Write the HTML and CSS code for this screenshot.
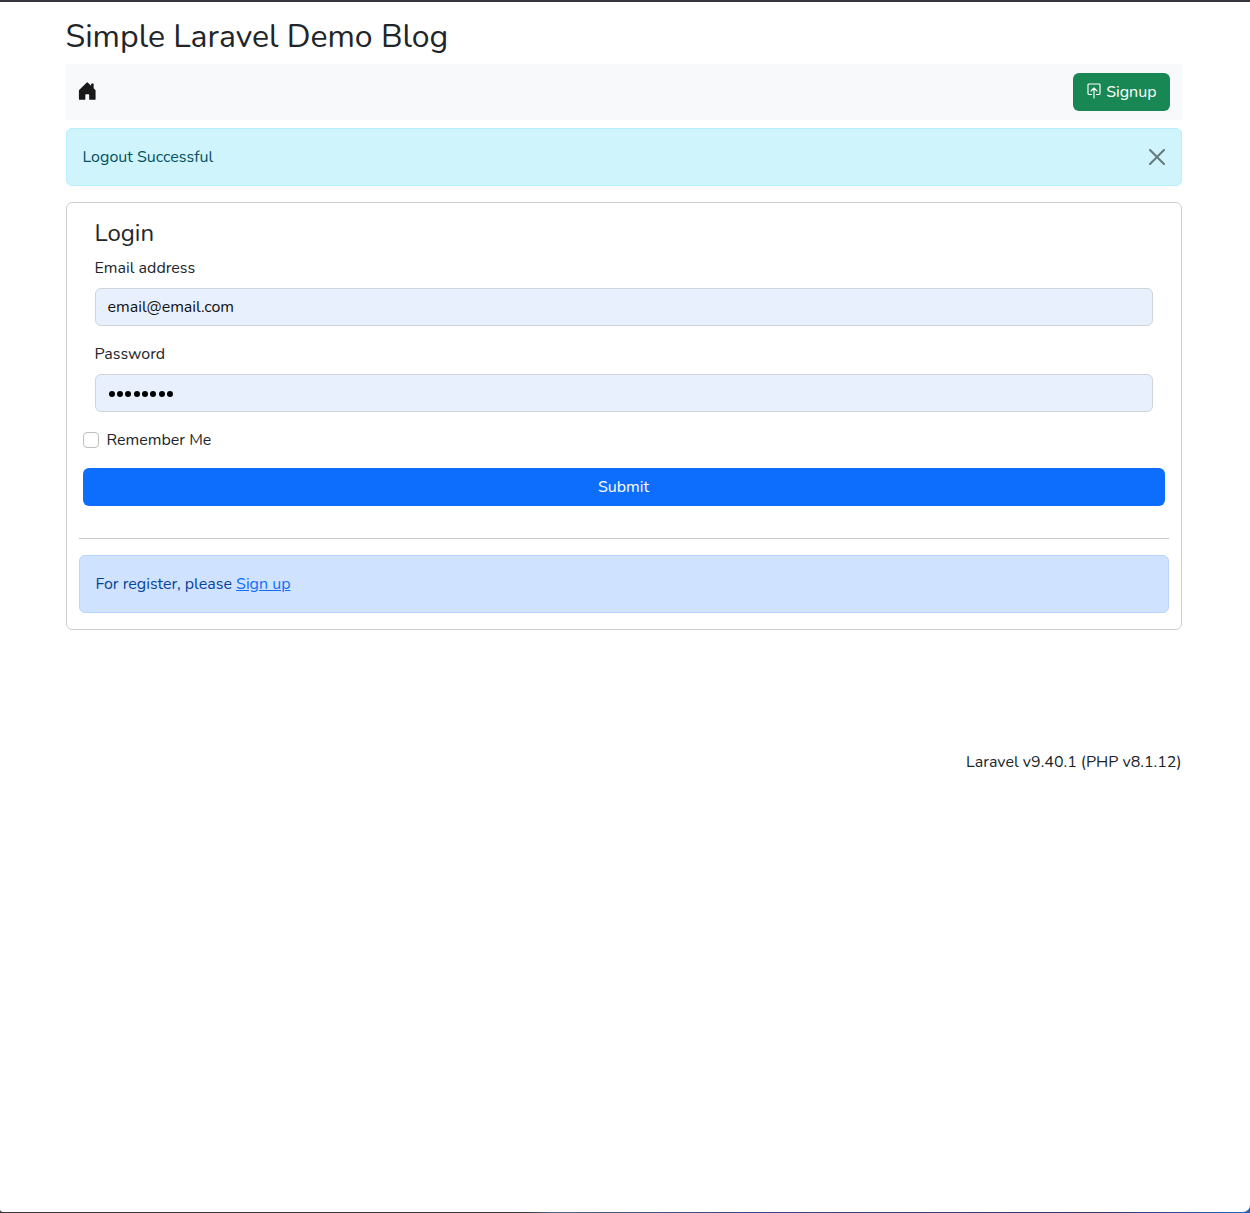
FILE: index.html
```html
<!DOCTYPE html>
<html lang="en">
<head>
<meta charset="utf-8">
<title>Simple Laravel Demo Blog</title>
<link rel="stylesheet" href="styles.css">
</head>
<body>
<div class="page">
  <main class="container">
    <h1 class="site-title">Simple Laravel Demo Blog</h1>
    <nav class="navbar">
      <a class="home" href="#" aria-label="Home"><svg width="20.5" height="20" viewBox="0 0 16 16" preserveAspectRatio="none" fill="currentColor"><path d="M6.5 14.5v-3.505c0-.245.25-.495.5-.495h2c.25 0 .5.25.5.5v3.5a.5.5 0 0 0 .5.5h4a.5.5 0 0 0 .5-.5v-7a.5.5 0 0 0-.146-.354L13 5.793V2.5a.5.5 0 0 0-.5-.5h-1a.5.5 0 0 0-.5.5v1.293L8.354 1.146a.5.5 0 0 0-.708 0l-6 6A.5.5 0 0 0 1.5 7.5v7a.5.5 0 0 0 .5.5h4a.5.5 0 0 0 .5-.5Z"/></svg></a>
      <a class="btn btn-success" href="#"><svg class="upload" width="16" height="16" viewBox="0 0 16 16" fill="none" stroke="currentColor" stroke-width="1.15"><path d="M5.5 11.5H2.9a.9.9 0 0 1-.9-.9V1.9a.9.9 0 0 1 .9-.9h10.2a.9.9 0 0 1 .9.9v8.7a.9.9 0 0 1-.9.9h-2.6M8 15V5M5 8l3-3 3 3" stroke-linecap="round" stroke-linejoin="round"/></svg><span>Signup</span></a>
    </nav>
    <div class="alert alert-info">
      <span>Logout Successful</span>
      <button class="close" aria-label="Close"><svg width="16" height="16" viewBox="0 0 16 16"><path d="M.293.293a1 1 0 0 1 1.414 0L8 6.586 14.293.293a1 1 0 1 1 1.414 1.414L9.414 8l6.293 6.293a1 1 0 0 1-1.414 1.414L8 9.414l-6.293 6.293a1 1 0 0 1-1.414-1.414L6.586 8 .293 1.707a1 1 0 0 1 0-1.414z"/></svg></button>
    </div>
    <section class="card">
      <form class="login">
        <div class="fields">
          <h4 class="card-title">Login</h4>
          <label class="label" for="email">Email address</label>
          <input class="input" id="email" type="text" value="email@email.com">
          <label class="label">Password</label>
          <div class="input dots"><i></i><i></i><i></i><i></i><i></i><i></i><i></i><i></i></div>
        </div>
        <label class="check"><input class="checkbox" type="checkbox"><span>Remember Me</span></label>
        <button class="btn btn-primary" type="button">Submit</button>
      </form>
      <hr class="divider">
      <div class="alert alert-primary"><span>For register, please <a class="link" href="#">Sign up</a></span></div>
    </section>
    <footer class="footer">Laravel v9.40.1 (PHP v8.1.12)</footer>
  </main>
</div>
</body>
</html>
```
FILE: styles.css
```css
* { box-sizing: border-box; }
body {
  margin: 0;
  background: linear-gradient(90deg, #38343c 0 42%, #4f6584 44%, #3c4684 60%, #38346a 88%, #2466b4 99.5%);
  color: #212529;
  font-family: Nunito, Lato, "Open Sans", sans-serif;
  font-size: 16px;
  line-height: 24px;
  font-weight: 400;
}
.page {
  height: 1212px;
  margin-bottom: 1px;
  border-top: 2px solid #38343c;
  border-radius: 0 0 7px 3px;
  background: #fff;
}
.container { width: 1116px; margin-left: 65.5px; padding-top: 15.6px; }
.site-title { margin: 0 0 8px; font-size: 32px; line-height: 38.4px; font-weight: 400; }
.navbar {
  display: flex;
  align-items: center;
  justify-content: space-between;
  height: 56px;
  padding: 0 12px;
  margin-bottom: 8px;
  background: #f8f9fa;
}
.home { display: flex; margin: 0 0 2px -.5px; color: #191919; }
.btn {
  display: flex;
  align-items: center;
  justify-content: center;
  height: 38px;
  padding: 0 13px;
  border: 0;
  border-radius: 6px;
  color: #fff;
  font: inherit;
  text-decoration: none;
}
.btn-success { gap: 4px; background: #198754; }
.upload { margin-bottom: 2px; }
.btn-primary { width: 100%; background: #0d6efd; }
.alert {
  display: flex;
  align-items: center;
  justify-content: space-between;
  height: 58px;
  padding: 0 16px;
  margin-bottom: 16px;
  border: 1px solid;
  border-radius: 6px;
}
.alert-info { color: #055160; background: #cff4fc; border-color: #b6effb; }
.alert-primary { color: #084298; background: #cfe2ff; border-color: #b6d4fe; margin: 0; }
.close { display: flex; padding: 0; border: 0; background: none; opacity: .5; }
.card { padding: 16px 12px; border: 1px solid #d0d0d1; border-radius: 6px; }
.login { padding: 0 4px; }
.fields { padding: 0 12px; }
.card-title { margin: 0 0 8px; font-size: 24px; line-height: 29px; font-weight: 400; }
.label { display: block; margin-bottom: 8px; }
.input {
  display: block;
  width: 100%;
  height: 38px;
  padding: 0 12px;
  margin-bottom: 16px;
  border: 1px solid #ced4da;
  border-radius: 6px;
  background: #e8f0fe;
  color: #111;
  font: inherit;
}
.dots { display: flex; align-items: center; gap: 2.4px; padding: 1px 13px 0; }
.dots i { width: 6px; height: 6px; border-radius: 50%; background: #000; }
.check { display: flex; align-items: center; gap: 8px; margin-bottom: 16px; }
.checkbox {
  appearance: none;
  width: 16px;
  height: 16px;
  margin: 0;
  border: 1px solid #bfbfbf;
  border-radius: 4px;
  background: #fff;
}
.divider { height: 1px; margin: 32px 0 16px; border: 0; background: #c8c9ca; }
.link { color: #0d6efd; }
.footer { margin-top: 120px; text-align: right; }
```
